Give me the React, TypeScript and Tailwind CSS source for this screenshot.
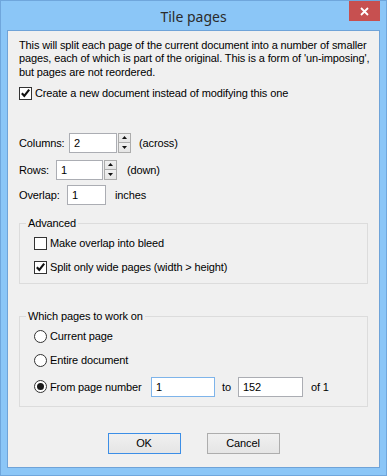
import React from 'react';

const font = { fontFamily: '"Liberation Sans", Arial, sans-serif' };

function Check({ checked }: { checked?: boolean }) {
  return (
    <span className="w-[13px] h-[13px] border border-[#333333] bg-white flex items-center justify-center shrink-0">
      {checked && (
        <svg width="11" height="11" viewBox="0 0 11 11">
          <path d="M1.8 5.2 L4.3 7.8 L9.2 1.6" fill="none" stroke="#111" strokeWidth="2.1" />
        </svg>
      )}
    </span>
  );
}

function Radio({ checked }: { checked?: boolean }) {
  return (
    <span className="w-[13px] h-[13px] rounded-full border border-[#333333] bg-white flex items-center justify-center shrink-0">
      {checked && <span className="w-[7px] h-[7px] rounded-full bg-[#1a1a1a]" />}
    </span>
  );
}

function Field({ value, w, focus }: { value: string; w: string; focus?: boolean }) {
  return (
    <div
      className={`${w} h-[20px] bg-white border flex items-center pl-[4px] text-black ${
        focus ? 'border-[#7eb4ea]' : 'border-[#abadb3]'
      }`}
    >
      {value}
    </div>
  );
}

function Spinner() {
  return (
    <div className="w-[13px] h-[20px] flex flex-col ml-[1px]">
      <div className="h-[10px] border border-[#acacac] bg-gradient-to-b from-[#f0f0f0] to-[#e5e5e5] flex items-center justify-center">
        <svg width="5" height="3" viewBox="0 0 5 3"><path d="M0 3 L2.5 0 L5 3 Z" fill="#111" /></svg>
      </div>
      <div className="h-[10px] border border-t-0 border-[#acacac] bg-gradient-to-b from-[#f0f0f0] to-[#e5e5e5] flex items-center justify-center">
        <svg width="5" height="3" viewBox="0 0 5 3"><path d="M0 0 L5 0 L2.5 3 Z" fill="#111" /></svg>
      </div>
    </div>
  );
}

export default function App() {
  return (
    <div
      className="w-[387px] h-[476px] bg-[#8bc6f7] border border-[#6fa6dc] flex flex-col pl-[6px] pr-[6px] pb-[7px] overflow-hidden"
      style={font}
    >
      {/* Title bar */}
      <div className="h-[29px] grid grid-cols-[1fr_auto_1fr] -mx-[6px]">
        <div />
        <div className="text-[14px] text-[#2b2b2b] flex items-center pt-[1px]" style={{ fontFamily: '"Noto Sans", sans-serif' }}>
          Tile pages
        </div>
        <div className="flex justify-end pr-[6px]">
          <div className="w-[31px] h-[20px] bg-[#c75050] flex items-center justify-center">
            <svg width="9" height="9" viewBox="0 0 9 9">
              <path d="M1 1 L8 8 M8 1 L1 8" stroke="#fff" strokeWidth="1.8" />
            </svg>
          </div>
        </div>
      </div>

      {/* Client area */}
      <div className="flex-1 bg-[#f0f0f0] border border-[#6fa3d8] px-[11px] pt-[8px] text-[11px] text-black tracking-[-0.12px]">
        <p className="leading-[13.3px] whitespace-nowrap">
          This will split each page of the current document into a number of smaller
          <br />
          pages, each of which is part of the original. This is a form of 'un-imposing',
          <br />
          but pages are not reordered.
        </p>

        <div className="flex items-center gap-[3px] mt-[8px] h-[13px]">
          <Check checked />
          <span>Create a new document instead of modifying this one</span>
        </div>

        <div className="flex items-center mt-[33px]">
          <span className="w-[50px]">Columns:</span>
          <Field value="2" w="w-[48px]" />
          <Spinner />
          <span className="ml-[8px]">(across)</span>
        </div>

        <div className="flex items-center mt-[7px]">
          <span className="w-[37px]">Rows:</span>
          <Field value="1" w="w-[47px]" />
          <Spinner />
          <span className="ml-[10px]">(down)</span>
        </div>

        <div className="flex items-center mt-[5px]">
          <span className="w-[48px]">Overlap:</span>
          <Field value="1" w="w-[39px]" />
          <span className="ml-[9px]">inches</span>
        </div>

        <fieldset className="border border-[#dcdcdc] mt-[12px] px-[14px] pt-[7px] pb-[9px] flex flex-col gap-[11px]">
          <legend className="-ml-[8px] px-[2px] leading-[13px]">Advanced</legend>
          <div className="flex items-center gap-[3px] h-[13px]">
            <Check />
            <span>Make overlap into bleed</span>
          </div>
          <div className="flex items-center gap-[3px] h-[13px]">
            <Check checked />
            <span>Split only wide pages (width &gt; height)</span>
          </div>
        </fieldset>

        <fieldset className="border border-[#dcdcdc] mt-[26px] px-[14px] pt-[7px] pb-[9px] flex flex-col">
          <legend className="-ml-[8px] px-[2px] leading-[13px]">Which pages to work on</legend>
          <div className="flex items-center gap-[3px] h-[13px]">
            <Radio />
            <span>Current page</span>
          </div>
          <div className="flex items-center gap-[3px] h-[13px] mt-[11px]">
            <Radio />
            <span>Entire document</span>
          </div>
          <div className="flex items-center h-[20px] mt-[10px]">
            <Radio checked />
            <span className="ml-[3px] w-[101px]">From page number</span>
            <Field value="1" w="w-[64px]" focus />
            <span className="ml-[7px] w-[16px]">to</span>
            <Field value="152" w="w-[65px]" />
            <span className="ml-[8px]">of 1</span>
          </div>
        </fieldset>

        <div className="flex justify-center gap-[26px] mt-[26px]">
          <div className="w-[73px] h-[21px] border border-[#3c8ee6] bg-gradient-to-b from-[#f0f0f0] to-[#e5e5e5] flex items-center justify-center">
            OK
          </div>
          <div className="w-[73px] h-[21px] border border-[#adadad] bg-gradient-to-b from-[#f0f0f0] to-[#e5e5e5] flex items-center justify-center">
            Cancel
          </div>
        </div>
      </div>
    </div>
  );
}
